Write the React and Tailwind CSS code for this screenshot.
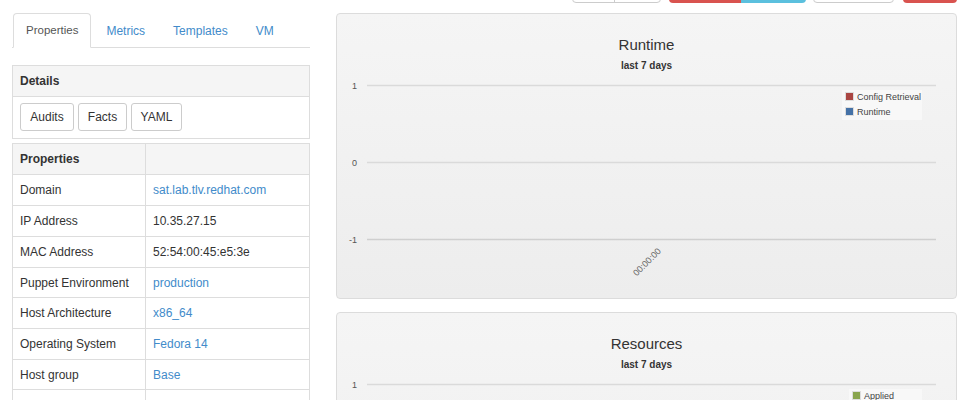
import React from "react";

const rows = [
  ["Domain", "sat.lab.tlv.redhat.com", true, "h-[31px]"],
  ["IP Address", "10.35.27.15", false, "h-[31px]"],
  ["MAC Address", "52:54:00:45:e5:3e", false, "h-[31px]"],
  ["Puppet Environment", "production", true, "h-[30px]"],
  ["Host Architecture", "x86_64", true, "h-[31px]"],
  ["Operating System", "Fedora 14", true, "h-[31px]"],
  ["Host group", "Base", true, "h-[30px]"],
  ["", "", false, "h-[31px]"],
];

function ChartPanel({ title, legend, legendX, legendW, showTimestamp }) {
  return (
    <div className="w-full h-[286px] shrink-0 border border-[#dcdcdc] rounded-[4px] bg-gradient-to-b from-[#f5f5f5] to-[#ededed] flex flex-col items-center overflow-hidden">
      <div className="pt-[22px] text-[15px] leading-[18px] text-[#333] shrink-0">{title}</div>
      <div className="mt-[6px] text-[10px] leading-[12px] font-bold text-[#333] shrink-0">last 7 days</div>
      <svg width="619" height="226" className="block shrink-0" style={{ fontFamily: '"Liberation Sans", Arial, sans-serif' }}>
        <line x1="30" y1="13.5" x2="599" y2="13.5" stroke="#dadada" strokeWidth="1.5" />
        <line x1="30" y1="90.5" x2="599" y2="90.5" stroke="#dadada" strokeWidth="1.5" />
        <line x1="30" y1="167.5" x2="599" y2="167.5" stroke="#cfcfcf" strokeWidth="1.5" />
        <text x="20" y="16.5" textAnchor="end" fontSize="9" fill="#555">1</text>
        <text x="20" y="93.5" textAnchor="end" fontSize="9" fill="#555">0</text>
        <text x="20" y="170.5" textAnchor="end" fontSize="9" fill="#555">-1</text>
        {showTimestamp && (
          <text x="310" y="193" textAnchor="middle" fontSize="9" fill="#666" transform="rotate(-45 310 190)">00:00:00</text>
        )}
        <rect x={legendX} y="18" width={legendW} height="30" fill="#f8f8f8" />
        {legend.map((l, i) => (
          <g key={l.name}>
            <rect x={legendX + 3.5} y={20.5 + i * 15} width="8" height="8" fill={l.color} stroke="#ddd" strokeWidth="1" />
            <text x={legendX + 15} y={27.5 + i * 15} fontSize="9" fill="#444">{l.name}</text>
          </g>
        ))}
      </svg>
    </div>
  );
}

export default function App() {
  return (
    <div
      className="w-[970px] h-[400px] overflow-hidden bg-white flex items-start text-[12px] text-[#333]"
      style={{ fontFamily: '"Liberation Sans", Arial, sans-serif' }}
    >
      {/* Left column */}
      <div className="ml-[12px] w-[298px] shrink-0 pt-[13px] flex flex-col">
        {/* Tabs */}
        <div className="flex h-[35px] shrink-0 border-b border-[#ddd] pl-[1px]">
          <div className="h-[35px] px-[12px] pt-[1px] flex items-center border border-[#ddd] border-b-white bg-white rounded-t-[4px] text-[#555] text-[11.5px]">
            Properties
          </div>
          <div className="ml-[2px] h-[34px] px-[13px] pt-[2px] flex items-center text-[#428bca]">Metrics</div>
          <div className="ml-[2px] h-[34px] px-[13px] pt-[2px] flex items-center text-[#428bca]">Templates</div>
          <div className="ml-[2px] h-[34px] px-[13px] pt-[2px] flex items-center text-[#428bca]">VM</div>
        </div>

        {/* Details panel */}
        <div className="mt-[17px] shrink-0 border border-[#ddd] h-[74px] flex flex-col">
          <div className="h-[31px] shrink-0 bg-[#f5f5f5] border-b border-[#ddd] flex items-center px-[7px] font-bold">Details</div>
          <div className="flex gap-[4px] px-[7px] pt-[6px]">
            <div className="h-[28px] w-[54px] border border-[#ccc] rounded-[3px] bg-white flex items-center justify-center">Audits</div>
            <div className="h-[28px] w-[49px] border border-[#ccc] rounded-[3px] bg-white flex items-center justify-center">Facts</div>
            <div className="h-[28px] w-[51px] border border-[#ccc] rounded-[3px] bg-white flex items-center justify-center">YAML</div>
          </div>
        </div>

        {/* Properties table */}
        <div className="mt-[4px] shrink-0 border-l border-r border-t border-[#ddd] flex flex-col">
          <div className="flex h-[31px] shrink-0 border-b border-[#ddd] bg-[#f5f5f5]">
            <div className="w-[133px] border-r border-[#ddd] flex items-center px-[7px] font-bold">Properties</div>
            <div className="flex-1"></div>
          </div>
          {rows.map(([k, v, link, h], i) => (
            <div key={i} className={"flex shrink-0 border-b border-[#ddd] bg-white " + h}>
              <div className="w-[133px] border-r border-[#ddd] flex items-center px-[7px]">{k}</div>
              <div className={"flex-1 flex items-center px-[7px] " + (link ? "text-[#428bca]" : "text-[#333]")}>{v}</div>
            </div>
          ))}
        </div>
      </div>

      {/* Right column */}
      <div className="ml-[26px] w-[621px] shrink-0 flex flex-col">
        <div className="h-[34px] -mt-[31px] flex justify-end items-stretch shrink-0">
          <div className="flex border border-[#ccc] rounded-[4px] bg-white w-[89px]">
            <div className="w-[42px] border-r border-[#ccc]"></div>
            <div className="flex-1"></div>
          </div>
          <div className="ml-[8px] flex rounded-[4px] overflow-hidden w-[137px]">
            <div className="w-[72px] bg-[#d9534f]"></div>
            <div className="flex-1 bg-[#5bc0de]"></div>
          </div>
          <div className="ml-[7px] w-[81px] border border-[#ccc] rounded-[4px] bg-white"></div>
          <div className="ml-[9px] w-[54px] rounded-[4px] bg-[#d9534f]"></div>
        </div>

        <div className="mt-[10px] flex flex-col gap-[13px] shrink-0">
          <ChartPanel
            title="Runtime"
            legendX={505}
            legendW={80}
            showTimestamp
            legend={[
              { name: "Config Retrieval", color: "#aa4643" },
              { name: "Runtime", color: "#4572a7" },
            ]}
          />
          <ChartPanel
            title="Resources"
            legendX={512}
            legendW={73}
            legend={[{ name: "Applied", color: "#89a54e" }]}
          />
        </div>
      </div>
    </div>
  );
}
